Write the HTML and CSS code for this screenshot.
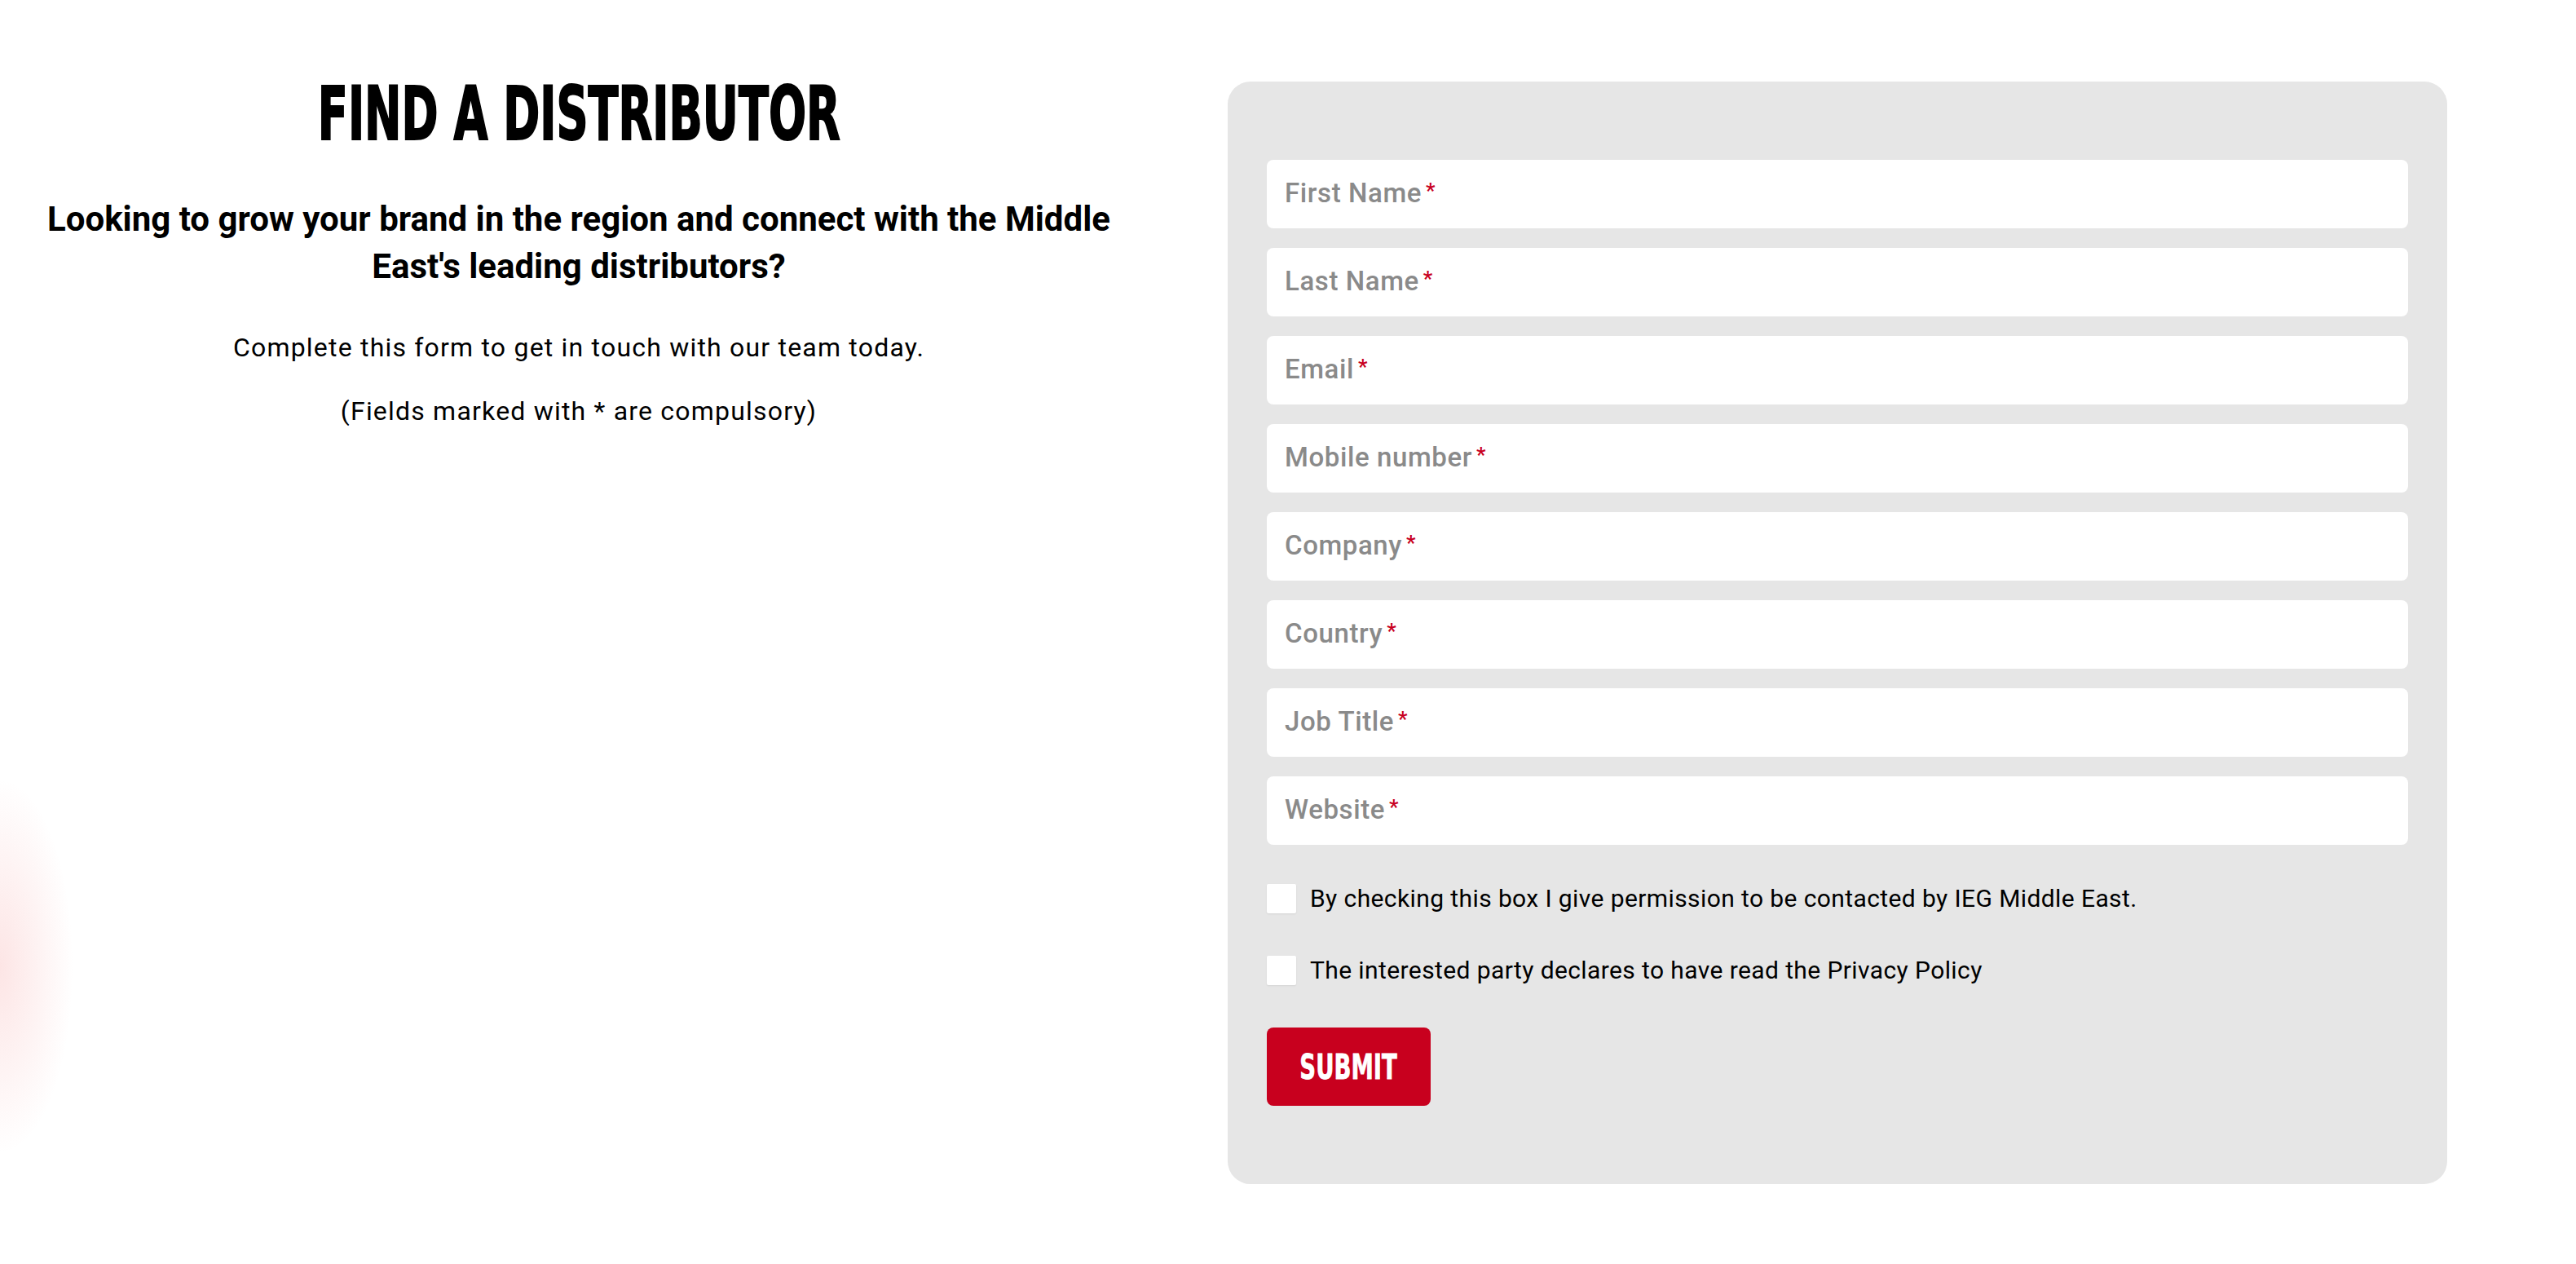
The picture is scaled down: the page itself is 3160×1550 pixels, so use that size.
FILE: index.html
```html
<!DOCTYPE html>
<html lang="en">
<head>
<meta charset="utf-8">
<title>Find a Distributor</title>
<link rel="stylesheet" href="styles.css">
</head>
<body>
<main class="page">
  <section class="intro">
    <h1 class="title"><span class="title-text">FIND A DISTRIBUTOR</span></h1>
    <p class="lead">Looking to grow your brand in the region and connect with the Middle<br>East's leading distributors?</p>
    <p class="copy">Complete this form to get in touch with our team today.</p>
    <p class="copy copy-note">(Fields marked with * are compulsory)</p>
  </section>

  <form class="panel" onsubmit="return false;">
    <div class="fields">
      <label class="field"><span class="ph">First Name<span class="req">*</span></span></label>
      <label class="field"><span class="ph">Last Name<span class="req">*</span></span></label>
      <label class="field"><span class="ph">Email<span class="req">*</span></span></label>
      <label class="field"><span class="ph">Mobile number<span class="req">*</span></span></label>
      <label class="field"><span class="ph">Company<span class="req">*</span></span></label>
      <label class="field"><span class="ph">Country<span class="req">*</span></span></label>
      <label class="field"><span class="ph">Job Title<span class="req">*</span></span></label>
      <label class="field"><span class="ph">Website<span class="req">*</span></span></label>
    </div>
    <div class="checks">
      <label class="check"><span class="box"></span><span class="check-text">By checking this box I give permission to be contacted by IEG Middle East.</span></label>
      <label class="check"><span class="box"></span><span class="check-text">The interested party declares to have read the Privacy Policy</span></label>
    </div>
    <button class="submit" type="submit"><span class="submit-text">SUBMIT</span></button>
  </form>
</main>
</body>
</html>
```

FILE: styles.css
```css
html, body {
  margin: 0;
  padding: 0;
}

body {
  min-height: 100vh;
  background-color: #ffffff;
  background-image: radial-gradient(ellipse 90px 230px at 0 1185px, rgba(238, 70, 70, 0.14), rgba(255, 255, 255, 0) 100%);
  background-repeat: no-repeat;
  font-family: Roboto, "Liberation Sans", sans-serif;
  color: #000;
}

.page {
  display: grid;
  grid-template-columns: 1420px 1496px;
  column-gap: 86px;
  padding-top: 100px;
  align-items: start;
}

/* left column */
.intro {
  display: flex;
  flex-direction: column;
  align-items: center;
  text-align: center;
}

.title {
  margin: 0;
  font-family: "DejaVu Sans", sans-serif;
  font-stretch: condensed;
  font-weight: 700;
  font-size: 90px;
  line-height: 80px;
  letter-spacing: 0;
}

.title-text {
  display: inline-block;
  transform: scaleX(0.67);
  -webkit-text-stroke: 2px #000;
  white-space: nowrap;
}

.lead {
  margin: 60px 0 0;
  font-weight: 700;
  font-size: 42px;
  line-height: 58px;
}

.copy {
  margin: 48px 0 0;
  font-size: 32px;
  line-height: 45px;
  letter-spacing: 1.2px;
}

.copy-note {
  margin-top: 33px;
}

/* form panel */
.panel {
  margin: 0;
  background: #e6e6e6;
  border-radius: 28px;
  padding: 96px 48px;
  display: flex;
  flex-direction: column;
  align-items: flex-start;
}

.fields {
  align-self: stretch;
  display: flex;
  flex-direction: column;
  gap: 24px;
}

.field {
  height: 84px;
  background: #ffffff;
  border-radius: 8px;
  display: flex;
  align-items: center;
  padding: 0 22px 4px;
  box-sizing: border-box;
}

.ph {
  font-weight: 500;
  font-size: 33px;
  letter-spacing: 0.6px;
  color: #8a8a8a;
  line-height: 1;
}

.req {
  color: #c8001e;
  font-size: 26px;
  margin-left: 5px;
  vertical-align: 5px;
  letter-spacing: 0;
}

.checks {
  margin-top: 48px;
  display: flex;
  flex-direction: column;
  gap: 52px;
}

.check {
  display: flex;
  align-items: center;
  gap: 17px;
}

.box {
  width: 36px;
  height: 36px;
  background: #ffffff;
  border-radius: 2px;
  box-shadow: 0 1px 2px rgba(0, 0, 0, 0.08);
  flex: none;
}

.check-text {
  font-size: 30px;
  line-height: 36px;
  letter-spacing: 0.4px;
  color: #000;
}

.submit {
  margin-top: 52px;
  width: 201px;
  height: 96px;
  border: 0;
  border-radius: 8px;
  background: #c8001e;
  color: #fff;
  padding: 0;
  cursor: pointer;
  font-family: "DejaVu Sans", sans-serif;
  font-stretch: condensed;
  font-weight: 700;
  font-size: 43px;
  line-height: 1;
}

.submit-text {
  display: inline-block;
  transform: scaleX(0.71);
  -webkit-text-stroke: 0.8px #fff;
}
```
